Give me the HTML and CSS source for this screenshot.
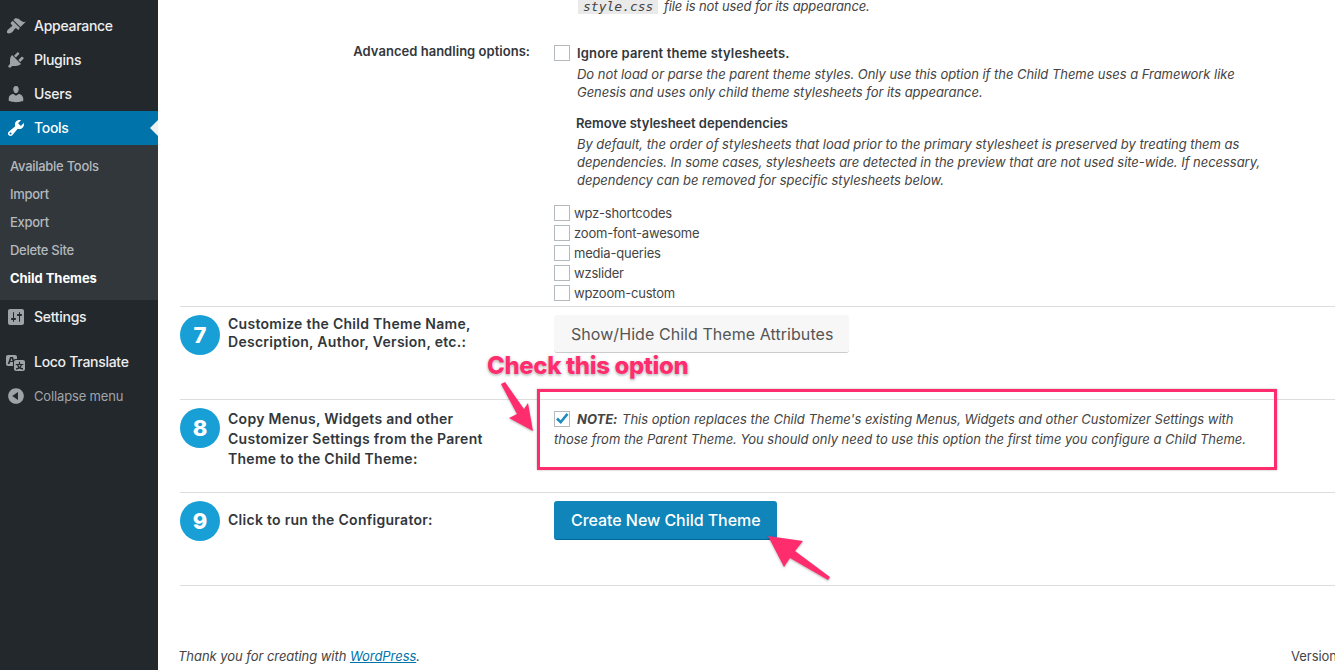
FILE: index.html
```html
<!DOCTYPE html>
<html lang="en">
<head>
  <meta charset="UTF-8">
  <title>Child Themes - Tools</title>
  <link rel="stylesheet" href="styles.css">
</head>
<body>

  <div class="sidebar">
    <div class="menu-item">
      <svg class="menu-icon" viewBox="0 0 20 20"><path d="M14.48 11.06L7.41 3.99l1.5-1.5c.5-.56 2.3-.47 3.51.32 1.21.8 1.43 1.28 2.91 2.1 1.18.64 2.45 1.26 4.45.85zm-.71.71L6.7 4.7 4.93 6.47c-.39.39-.39 1.02 0 1.41l1.06 1.06c.39.39.39 1.03 0 1.42-.6.6-1.43 1.11-2.21 1.69-.35.26-.7.53-1.01.84C1.43 13.23.4 16.08 1.4 17.07c.99 1 3.84-.03 5.18-1.36.31-.31.58-.66.85-1.02.57-.78 1.08-1.6 1.69-2.21.39-.39 1.02-.39 1.41 0l1.06 1.06c.39.39 1.02.39 1.41 0z"/></svg>
      <span>Appearance</span>
    </div>
    <div class="menu-item">
      <svg class="menu-icon" viewBox="0 0 20 20"><path d="M13.11 4.36L9.87 7.6 8 5.73l3.24-3.24c.35-.34 1.05-.2 1.56.32.52.51.66 1.21.31 1.55zm-8 1.77l.91-1.12 9.01 9.01-1.19.84c-.71.71-2.63 1.16-3.82 1.16H6.14L4.9 17.26c-.59.59-1.54.59-2.12 0-.59-.58-.59-1.53 0-2.12l1.24-1.24v-3.88c0-1.13.4-3.19 1.09-3.89zm7.26 3.97l3.24-3.24c.34-.35 1.04-.21 1.55.31.52.51.66 1.21.31 1.55l-3.24 3.25z"/></svg>
      <span>Plugins</span>
    </div>
    <div class="menu-item">
      <svg class="menu-icon" viewBox="0 0 20 20"><path d="M10 9.25c-2.27 0-2.73-3.44-2.73-3.44C7 4.02 7.82 2 9.97 2c2.16 0 2.98 2.02 2.71 3.81 0 0-.41 3.44-2.68 3.44zm0 2.57L12.72 10c2.39 0 4.52 2.33 4.52 4.53v2.49s-3.65 1.13-7.24 1.13c-3.65 0-7.24-1.13-7.24-1.13v-2.49c0-2.25 1.94-4.48 4.47-4.48z"/></svg>
      <span>Users</span>
    </div>
    <div class="menu-item active">
      <svg class="menu-icon" viewBox="0 0 20 20"><path d="M16.68 9.77c-1.34 1.34-3.3 1.67-4.95.99l-5.41 6.52c-.99.99-2.59.99-3.58 0s-.99-2.59 0-3.57l6.52-5.42c-.68-1.65-.35-3.61.99-4.95 1.28-1.28 3.12-1.62 4.72-1.06l-2.89 2.89 2.82 2.82 2.86-2.87c.53 1.58.18 3.39-1.08 4.65zM3.81 16.21c.4.39 1.04.39 1.43 0 .4-.4.4-1.04 0-1.43-.39-.4-1.03-.4-1.43 0-.39.39-.39 1.03 0 1.43z"/></svg>
      <span>Tools</span>
    </div>
    <div class="submenu">
      <div class="sub-item">Available Tools</div>
      <div class="sub-item">Import</div>
      <div class="sub-item">Export</div>
      <div class="sub-item">Delete Site</div>
      <div class="sub-item current">Child Themes</div>
    </div>
    <div class="menu-item">
      <svg class="menu-icon" viewBox="0 0 20 20"><path d="M18 16V4c0-1.1-.9-2-2-2H4c-1.1 0-2 .9-2 2v12c0 1.1.9 2 2 2h12c1.1 0 2-.9 2-2zM8 11h1c.55 0 1 .45 1 1s-.45 1-1 1H8v1.5c0 .28-.22.5-.5.5s-.5-.22-.5-.5V13H6c-.55 0-1-.45-1-1s.45-1 1-1h1V5.5c0-.28.22-.5.5-.5s.5.22.5.5V11zm5-2h-1c-.55 0-1-.45-1-1s.45-1 1-1h1V5.5c0-.28.22-.5.5-.5s.5.22.5.5V7h1c.55 0 1 .45 1 1s-.45 1-1 1h-1v5.5c0 .28-.22.5-.5.5s-.5-.22-.5-.5V9z"/></svg>
      <span>Settings</span>
    </div>
    <div class="menu-item loco">
      <svg class="menu-icon" viewBox="0 0 20 20"><path d="M11 7H9.49c-.63 0-1.25.3-1.59.7L7 5H4.13l-2.39 7h1.69l.74-2H7v4H2c-1.1 0-2-.9-2-2V5c0-1.1.9-2 2-2h7c1.1 0 2 .9 2 2v2zM6.51 9H4.49l1-2.93zM10 8h7c1.1 0 2 .9 2 2v7c0 1.1-.9 2-2 2h-7c-1.1 0-2-.9-2-2v-7c0-1.1.9-2 2-2zm7.25 5v-1.08h-3.17V9.75h-1.16v2.17H9.75V13h1.28c.11.85.56 1.85 1.28 2.62-.87.36-1.89.62-2.31.62-.01.02.22.97.2 1.46.84 0 2.21-.5 3.28-1.15 1.09.65 2.48 1.15 3.34 1.15-.02-.49.2-1.44.2-1.46-.43 0-1.49-.27-2.38-.63.7-.77 1.14-1.77 1.25-2.61h1.36zm-3.81 1.93c-.5-.46-.85-1.13-1.01-1.93h2.09c-.17.8-.51 1.47-1 1.93l-.04.03s-.03-.02-.04-.03z"/></svg>
      <span>Loco Translate</span>
    </div>
    <div class="menu-item collapse">
      <svg class="menu-icon" viewBox="0 0 20 20"><path d="M10 2.16c4.33 0 7.84 3.51 7.84 7.84s-3.51 7.84-7.84 7.84S2.16 14.33 2.16 10 5.71 2.16 10 2.16zm2 11.72V6.12L6.18 9.97z"/></svg>
      <span>Collapse menu</span>
    </div>
  </div>

  <div class="main">
    <div class="row row-advanced">
      <div class="adv-label">Advanced handling options:</div>
      <div class="adv-value">
        <p class="cut-line"><code>style.css</code> file is not used for its appearance.</p>
        <label class="check-title"><span class="checkbox"></span>Ignore parent theme stylesheets.</label>
        <p class="desc">Do not load or parse the parent theme styles. Only use this option if the Child Theme uses a Framework like<br>Genesis and uses only child theme stylesheets for its appearance.</p>
        <h4 class="sub-title">Remove stylesheet dependencies</h4>
        <p class="desc">By default, the order of stylesheets that load prior to the primary stylesheet is preserved by treating them as<br>dependencies. In some cases, stylesheets are detected in the preview that are not used site-wide. If necessary,<br>dependency can be removed for specific stylesheets below.</p>
        <ul class="dep-list">
          <li><span class="checkbox"></span>wpz-shortcodes</li>
          <li><span class="checkbox"></span>zoom-font-awesome</li>
          <li><span class="checkbox"></span>media-queries</li>
          <li><span class="checkbox"></span>wzslider</li>
          <li><span class="checkbox"></span>wpzoom-custom</li>
        </ul>
      </div>
    </div>

    <div class="row row-step">
      <div class="step">
        <div class="step-num">7</div>
        <div class="step-label tight">Customize the Child Theme Name,<br>Description, Author, Version, etc.:</div>
      </div>
      <div><button class="btn">Show/Hide Child Theme Attributes</button></div>
    </div>

    <div class="row row-step">
      <div class="step">
        <div class="step-num">8</div>
        <div class="step-label">Copy Menus, Widgets and other<br>Customizer Settings from the Parent<br>Theme to the Child Theme:</div>
      </div>
      <div class="note">
        <span class="checkbox checked">
          <svg viewBox="0 0 14 14"><path d="M1 7.5l2-2 2.6 2.7L11.5 1l2 1.8L5.8 12z"/></svg>
        </span><b>NOTE:</b> This option replaces the Child Theme's existing Menus, Widgets and other Customizer Settings with<br>those from the Parent Theme. You should only need to use this option the first time you configure a Child Theme.
      </div>
    </div>

    <div class="row row-step">
      <div class="step">
        <div class="step-num">9</div>
        <div class="step-label single">Click to run the Configurator:</div>
      </div>
      <div><button class="btn btn-primary">Create New Child Theme</button></div>
    </div>

    <div class="footer">
      <span>Thank you for creating with <a href="#">WordPress</a>.</span>
      <span class="version">Version</span>
    </div>
  </div>

  <!-- annotations drawn over the screenshot -->
  <div class="callout-box"></div>
  <div class="callout-text">Check this option</div>
  <svg class="callout-arrows" viewBox="0 0 1335 670">
    <polygon points="501,384 505,382 524,409 528,403 533,431 509,418 517,414"/>
    <polygon points="768,536 803,541 795,551 830,577 828,580 790,558 784,567"/>
  </svg>

</body>
</html>
```

FILE: styles.css
```css
* {
  margin: 0; padding: 0; box-sizing: border-box;
}

html, body {
  height: 100%;
}

body {
  font-family: 'Inter', sans-serif;
  font-size: 13px;
  color: #444;
  background: #fff;
  display: flex;
  overflow: hidden;
  position: relative;
}

/* sidebar */

.sidebar {
  width: 158px;
  flex-shrink: 0;
  background: #23282d;
  padding-top: 9px;
}

.menu-item {
  display: flex;
  align-items: center;
  height: 34px;
  padding-left: 6px;
  color: #eee;
  font-size: 14px;
  font-weight: 500;
  letter-spacing: -0.28px;
  position: relative;
}

.menu-item span {
  padding-bottom: 2px;
}

.menu-icon {
  width: 20px;
  height: 20px;
  margin-right: 8px;
  fill: #9ea3a8;
}

.menu-item.active {
  background: #0073aa;
  color: #fff;
}

.menu-item.active .menu-icon {
  fill: #fff;
}

.menu-item.active::after {
  content: "";
  position: absolute;
  right: 0;
  top: 9px;
  border: 8px solid transparent;
  border-left-width: 0;
  border-right-color: #f1f1f1;
}

.submenu {
  background: #32373c;
  padding: 7px 0 8px;
}

.sub-item {
  height: 28px;
  line-height: 28px;
  padding-left: 10px;
  color: #b4b9be;
  font-size: 13px;
  font-weight: 500;
  letter-spacing: -0.28px;
}

.sub-item.current {
  color: #fff;
  font-weight: 700;
  letter-spacing: -0.05px;
}

.loco {
  margin-top: 11px;
}

.collapse {
  color: #a0a5aa;
  font-size: 13px;
  font-weight: 400;
  letter-spacing: -0.15px;
}

.collapse span {
  padding-bottom: 0;
}

/* main content */

.main {
  flex: 1;
  min-width: 0;
  padding-left: 22px;
  display: flex;
  flex-direction: column;
}

.row {
  display: grid;
  grid-template-columns: 350px 1fr;
  column-gap: 24px;
  border-bottom: 1px solid #ddd;
}

.row-advanced {
  height: 307px;
}

.row-step {
  height: 93px;
  padding-top: 8px;
}

.adv-label {
  padding-top: 43px;
  text-align: right;
  font-weight: 600;
  line-height: 16px;
  color: #32373c;
  letter-spacing: 0.03px;
}

.cut-line {
  margin-top: -3px;
  padding-left: 24px;
  height: 18px;
  line-height: 18px;
  font-style: italic;
  letter-spacing: -0.12px;
}

code {
  font-family: 'DejaVu Sans Mono', monospace;
  font-size: 13px;
  font-style: italic;
  letter-spacing: 0;
  background: #eaeaea;
  padding: 0 5px;
  margin-right: 2px;
}

.checkbox {
  display: inline-block;
  width: 16px;
  height: 16px;
  border: 1px solid #b4b9be;
  background: #fff;
  flex-shrink: 0;
}

.check-title {
  display: flex;
  align-items: center;
  margin-top: 30px;
  height: 16px;
  font-weight: 600;
  color: #32373c;
  letter-spacing: 0.16px;
}

.check-title .checkbox {
  margin-right: 7px;
}

.desc {
  font-style: italic;
  line-height: 18px;
  margin-left: 23px;
  letter-spacing: -0.035px;
}

.check-title + .desc {
  margin-top: 4px;
}

.sub-title {
  font-size: 13px;
  font-weight: 600;
  line-height: 18px;
  color: #32373c;
  margin: 13px 0 3px 22px;
}

.dep-list {
  list-style: none;
  margin-top: 14px;
  letter-spacing: -0.2px;
}

.dep-list li {
  display: flex;
  align-items: center;
  height: 20px;
}

.dep-list .checkbox {
  margin-right: 4px;
}

.step {
  display: flex;
  gap: 8px;
}

.step-num {
  width: 40px;
  height: 40px;
  border-radius: 50%;
  background: #18a0d6;
  color: #fff;
  font-size: 22px;
  font-weight: 800;
  line-height: 40px;
  text-align: center;
  flex-shrink: 0;
}

.step-label {
  font-size: 14px;
  font-weight: 600;
  line-height: 20px;
  letter-spacing: 0.28px;
  color: #32373c;
  padding-top: 1px;
}

.step-label.tight {
  line-height: 18px;
  padding-top: 0;
}

.step-label.single {
  padding-top: 9px;
}

.btn {
  height: 38px;
  padding: 0 16px 0 17px;
  font-family: 'Inter', sans-serif;
  font-size: 16px;
  letter-spacing: 0.06px;
  color: #555;
  background: #f7f7f7;
  border: none;
  border-bottom: 1px solid #ccc;
  border-radius: 3px;
}

.btn-primary {
  height: 39px;
  background: #0f85ba;
  border-bottom-color: #006799;
  color: #fff;
  font-weight: 500;
  letter-spacing: -0.05px;
}

.note {
  font-style: italic;
  line-height: 20px;
  padding-top: 1px;
  letter-spacing: -0.02px;
}

.note b {
  font-weight: 700;
  margin-right: 1px;
}

.checked {
  vertical-align: -3px;
  margin-right: 7px;
}

.checked svg {
  display: block;
  width: 14px;
  height: 14px;
  fill: #1e8cbe;
}

.footer {
  margin-top: auto;
  height: 22px;
  display: flex;
  justify-content: space-between;
  margin-left: -2px;
  font-style: italic;
  letter-spacing: -0.05px;
}

.footer a {
  color: #0073aa;
}

.version {
  font-style: normal;
  margin-right: -2px;
}

/* annotations */

.callout-box {
  position: absolute;
  left: 537px;
  top: 389px;
  width: 740px;
  height: 81px;
  border: 3px solid #ff2d6d;
  box-shadow: 0 0 2px rgba(0, 0, 0, 0.3);
}

.callout-text {
  position: absolute;
  left: 487px;
  top: 350px;
  font-size: 24px;
  font-weight: 800;
  letter-spacing: -0.38px;
  line-height: 32px;
  color: #ff2d6d;
  text-shadow: 0 0 2px #fff, 0 1px 3px rgba(0, 0, 0, 0.45);
  white-space: nowrap;
}

.callout-arrows {
  position: absolute;
  left: 0;
  top: 0;
  width: 1335px;
  height: 670px;
  fill: #ff2d6d;
  filter: drop-shadow(0 1px 1px rgba(0, 0, 0, 0.3));
  pointer-events: none;
}
```
